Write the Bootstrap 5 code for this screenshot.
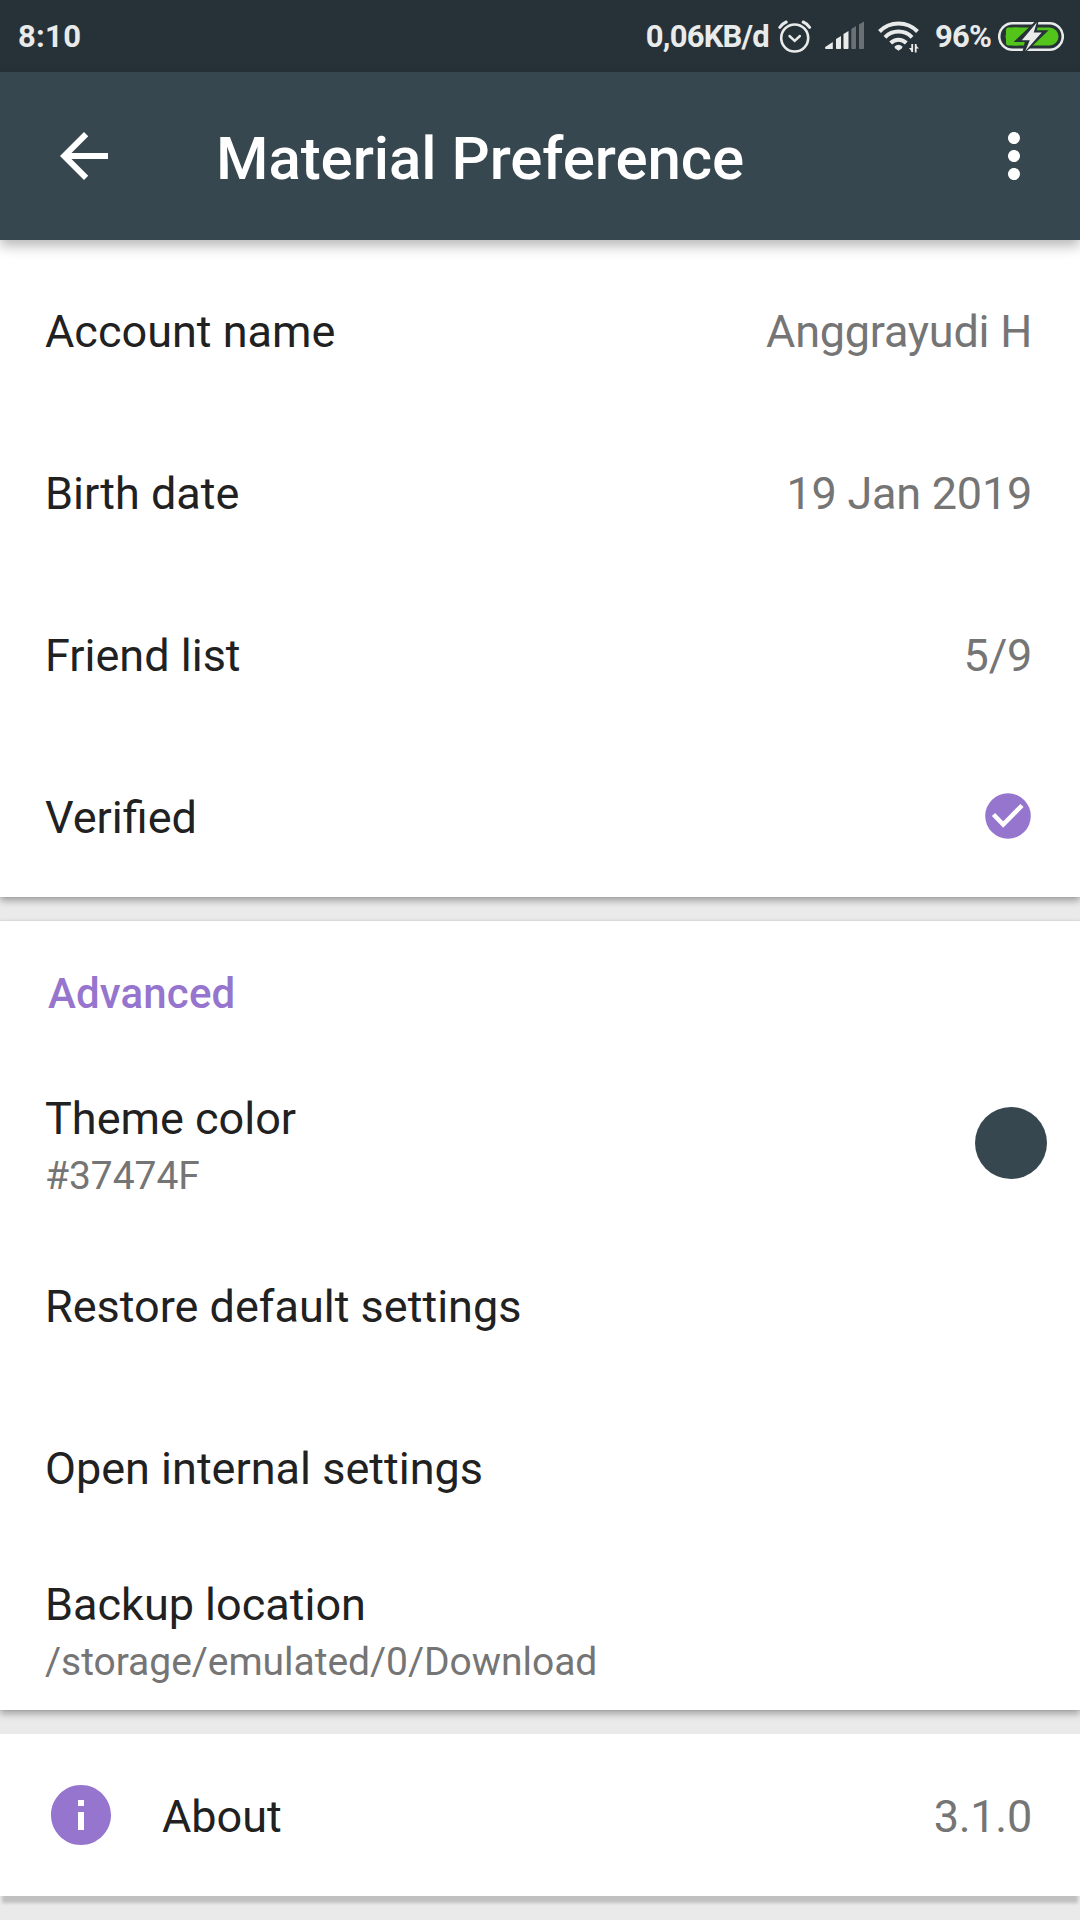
<!DOCTYPE html>
<html lang="en">
<head>
<meta charset="utf-8">
<meta name="viewport" content="width=device-width, initial-scale=1">
<title>Material Preference</title>
<link href="https://cdn.jsdelivr.net/npm/bootstrap@5.3.0/dist/css/bootstrap.min.css" rel="stylesheet">
<style>
  body { font-family: Roboto, "Liberation Sans", sans-serif; background: #eaeaea; color: #212121; height: 1920px; overflow: hidden; }
  svg { display: block; flex: none; }
  .statusbar { height: 72px; background: #263238; color: #e9ebeb; font-weight: 700; font-size: 31px; line-height: 72px; padding: 0 16px 0 18px; }
  .status-text { height: 72px; padding-top: 1px; letter-spacing: .3px; }
  .status-tight { letter-spacing: -.8px; }
  .icon-alarm { margin-left: 9px; }
  .icon-signal { margin-left: 12px; }
  .icon-wifi { margin-left: 14px; }
  .status-percent { margin-left: 15px; }
  .icon-battery { margin-left: 7px; }
  .appbar { height: 168px; background: #37474f; color: #fff; padding: 0 30px 0 48px; z-index: 2; box-shadow: 0 6px 12px rgba(0,0,0,.28); }
  .appbar-title { font-size: 60px; font-weight: 500; line-height: 72px; letter-spacing: -.06px; margin-left: 96px; padding-top: 5px; white-space: nowrap; }
  .pref-card { background: #fff; box-shadow: 0 4px 7px rgba(0,0,0,.3), 0 0 2px rgba(0,0,0,.12); }
  .pref-first { padding-top: 9px; }
  .pref-last { box-shadow: 0 9px 3px -2px #c0c0c0; }
  .pref-row { height: 162px; padding: 0 48px 0 45px; }
  .pref-title { font-size: 45px; line-height: 54px; padding-top: 4px; }
  .pref-value { font-size: 45px; line-height: 54px; padding-top: 4px; color: #757575; letter-spacing: -.25px; }
  .pref-sub { font-size: 39px; line-height: 46px; color: #757575; padding-top: 7px; letter-spacing: -.04px; }
  .pref-head { height: 141px; padding: 48px 48px 0; font-size: 42px; font-weight: 500; line-height: 50px; letter-spacing: .15px; color: #9575cd; }
  .pref-lead { margin-left: 45px; }
  .check-icon { margin-right: 1px; }
  .swatch { width: 72px; height: 72px; background: #37474f; margin-right: -15px; }
</style>
<script src="https://cdn.jsdelivr.net/npm/bootstrap@5.3.0/dist/js/bootstrap.bundle.min.js"></script>
</head>
<body>
<header class="statusbar d-flex align-items-center justify-content-between">
  <div class="status-text">8:10</div>
  <div class="d-flex align-items-center">
    <div class="status-text status-tight">0,06KB/d</div>
    <svg class="icon-alarm" width="34" height="72" viewBox="778 0 34 72" fill="none" stroke="#e9ebeb" stroke-width="2.6" stroke-linecap="round">
      <circle cx="794.7" cy="38" r="13.5"/><path d="M789.5 36l5.2 4.800 5.200-4.800" stroke-width="2.400"/>
      <path d="M779.800 27.400q3-4 6.400-5.400M809.600 27.400q-3-4-6.400-5.400" stroke-width="3"/>
    </svg>
    <svg class="icon-signal" width="40" height="72" viewBox="824 0 40 72" fill="#e9ebeb">
      <path d="M826 46.500l6.800-4.500v7h-6a1.200 1.200 0 0 1-.8-2.500zM836 39l5-3v12.200q0 .8-.8.8h-3.400q-.8 0-.8-.8zM843.500 34l5-3v17.200q0 .8-.8.8h-3.400q-.8 0-.8-.8z"/>
      <path fill="#697174" d="M851.300 29l4.700-3v22.200q0 .8-.8.8h-3.100q-.8 0-.8-.8zM859 24.500l5-3v26.700q0 .8-.8.8h-3.400q-.8 0-.8-.8z"/>
    </svg>
    <svg class="icon-wifi" width="42" height="72" viewBox="878 0 42 72" fill="none" stroke="#e9ebeb" stroke-width="4">
      <path d="M879.500 31.500a26.600 26.600 0 0 1 38 0M885 37.300a18.800 18.800 0 0 1 27 0M890.700 43a11 11 0 0 1 15.600 0"/>
      <path stroke="none" fill="#e9ebeb" d="M894.500 46.500q4-3.500 8 0l-.4 1.700-3.600 2.500-3.600-2.500z"/>
      <path stroke-width="1.800" d="M912.200 44v8M915.700 44v8.500"/><path stroke="none" fill="#e9ebeb" d="M909 48h3v4zM915 44.500l4 4h-4z"/>
    </svg>
    <div class="status-text status-tight status-percent">96%</div>
    <svg class="icon-battery" width="66" height="72" viewBox="998 0 66 72">
      <rect x="999.200" y="23.200" width="63.600" height="26.600" rx="13.300" fill="none" stroke="#e9ebeb" stroke-width="2.600"/>
      <rect x="1005.500" y="27.500" width="53" height="18" rx="9" fill="#52c41a"/>
      <path fill="#52c41a" d="M1006 30q0-2.500 2.500-2.500h10v18h-10q-2.500 0-2.500-2.500z"/>
      <path d="M1036.500 22.500l-18.500 17.700h9l-2.500 10.800 19.800-19h-9.300z" fill="#263238" stroke="#263238" stroke-width="3.500"/>
      <path d="M1036.800 22.500l-15 17.700h8l-4.600 11 16.500-18.700h-8z" fill="#e9ebeb"/>
    </svg>
  </div>
</header>

<nav class="appbar position-relative d-flex align-items-center">
  <svg width="72" height="72" viewBox="0 0 24 24" fill="#fff"><path d="M20 11H7.830l5.590-5.590L12 4l-8 8 8 8 1.410-1.410L7.830 13H20v-2z"/></svg>
  <div class="appbar-title">Material Preference</div>
  <svg class="ms-auto" width="72" height="72" viewBox="0 0 24 24" fill="#fff"><path d="M12 8c1.100 0 2-.9 2-2s-.9-2-2-2-2 .9-2 2 .9 2 2 2zm0 2c-1.100 0-2 .9-2 2s.9 2 2 2 2-.9 2-2-.9-2-2-2zm0 6c-1.100 0-2 .9-2 2s.9 2 2 2 2-.9 2-2-.9-2-2-2z"/></svg>
</nav>

<main class="d-flex flex-column gap-4">
  <section class="pref-card pref-first">
    <div class="pref-row d-flex align-items-center justify-content-between"><div class="pref-title">Account name</div><div class="pref-value">Anggrayudi H</div></div>
    <div class="pref-row d-flex align-items-center justify-content-between"><div class="pref-title">Birth date</div><div class="pref-value">19 Jan 2019</div></div>
    <div class="pref-row d-flex align-items-center justify-content-between"><div class="pref-title">Friend list</div><div class="pref-value">5/9</div></div>
    <div class="pref-row d-flex align-items-center justify-content-between"><div class="pref-title">Verified</div>
      <svg class="check-icon" width="46" height="46" viewBox="0 0 46 46"><circle cx="23" cy="23" r="22.800" fill="#9575cd"/><path d="M8.500 21.500L18.200 31.500 37 12.500" fill="none" stroke="#fff" stroke-width="4.500"/></svg>
    </div>
  </section>

  <section class="pref-card">
    <div class="pref-head">Advanced</div>
    <div class="pref-row d-flex align-items-center justify-content-between"><div><div class="pref-title">Theme color</div><div class="pref-sub">#37474F</div></div><div class="swatch rounded-circle"></div></div>
    <div class="pref-row d-flex align-items-center"><div class="pref-title">Restore default settings</div></div>
    <div class="pref-row d-flex align-items-center"><div class="pref-title">Open internal settings</div></div>
    <div class="pref-row d-flex align-items-center"><div><div class="pref-title">Backup location</div><div class="pref-sub">/storage/emulated/0/Download</div></div></div>
  </section>

  <section class="pref-card pref-last">
    <div class="pref-row d-flex align-items-center">
      <svg width="72" height="72" viewBox="0 0 24 24" fill="#9575cd"><path d="M12 2C6.480 2 2 6.480 2 12s4.480 10 10 10 10-4.480 10-10S17.520 2 12 2zm1 15h-2v-6h2v6zm0-8h-2V7h2v2z"/></svg>
      <div class="pref-title pref-lead">About</div>
      <div class="pref-value ms-auto">3.1.0</div>
    </div>
  </section>
</main>
</body>
</html>
